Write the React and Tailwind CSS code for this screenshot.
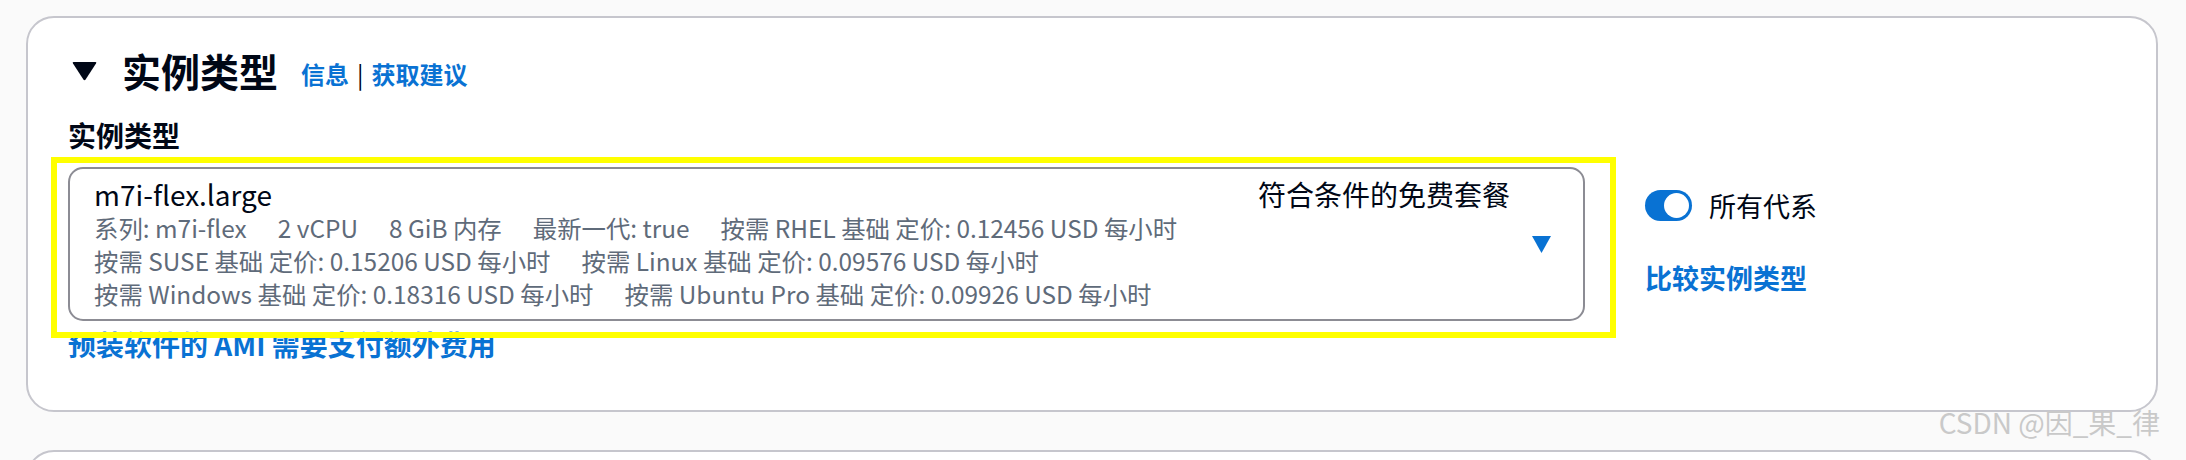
export default function App() {
  const font = { fontFamily: '"Noto Sans CJK SC", "Noto Sans", sans-serif' };

  const lines = [
    ['系列: m7i-flex', '2 vCPU', '8 GiB 内存', '最新一代: true', '按需 RHEL 基础 定价: 0.12456 USD 每小时'],
    ['按需 SUSE 基础 定价: 0.15206 USD 每小时', '按需 Linux 基础 定价: 0.09576 USD 每小时'],
    ['按需 Windows 基础 定价: 0.18316 USD 每小时', '按需 Ubuntu Pro 基础 定价: 0.09926 USD 每小时'],
  ];

  return (
    <div className="relative h-[460px] w-[2186px] overflow-hidden bg-[#fafafa] pt-[16px]" style={font}>
      {/* Main card */}
      <div className="ml-[26px] h-[396px] w-[2132px] rounded-[28px] border-2 border-[#c6c6cd] bg-white pl-[40px] pt-[26px]">
        {/* Header */}
        <div className="flex h-[52px] items-center">
          <svg width="25" height="20" viewBox="0 0 25 20" className="ml-[4px] mt-[2px]">
            <path d="M1.5 1 H23.5 Q25 1 24 2.6 L13.6 18.4 Q12.5 20 11.4 18.4 L1 2.6 Q0 1 1.5 1 Z" fill="#000716" />
          </svg>
          <h2 className="ml-[25px] text-[39px] font-bold leading-none text-[#000716]">实例类型</h2>
          <div className="ml-[23px] mt-[8px] flex items-center text-[24px] font-bold text-[#0972d3]">
            <span>信息</span>
            <span className="mx-[8px] font-normal text-[#000716]">|</span>
            <span>获取建议</span>
          </div>
        </div>

        {/* Label */}
        <div className="mt-[22px] text-[28px] font-bold leading-[34px] text-[#000716]">实例类型</div>

        {/* Select row */}
        <div className="mt-[15px] flex items-start">
          <div className="relative">
            <div className="flex h-[154px] w-[1517px] items-center rounded-[15px] border-2 border-[#8c8c94] py-[9px] pl-[24px] pr-[32px]">
              <div className="flex-1">
                <div className="flex items-center justify-between leading-[33px]">
                  <span className="text-[28px] text-[#000716]">m7i-flex.large</span>
                  <span className="text-[28px] text-[#000716]">符合条件的免费套餐</span>
                </div>
                {lines.map((parts, i) => (
                  <div key={i} className="flex gap-[31px] text-[24.4px] leading-[33px] text-[#5f6b7a]">
                    {parts.map((p) => (
                      <span key={p}>{p}</span>
                    ))}
                  </div>
                ))}
              </div>
              <svg width="19" height="17" viewBox="0 0 19 17" className="ml-[22px]">
                <path d="M0 0 H19 L9.5 17 Z" fill="#0972d3" />
              </svg>
            </div>
            {/* highlight annotation */}
            <div className="pointer-events-none absolute -bottom-[17px] -left-[17px] -right-[31px] -top-[10px] z-10 border-[6px] border-[#ffff00]" />
          </div>

          {/* Right column */}
          <div className="ml-[60px] pt-[23px]">
            <div className="flex items-center">
              <div className="flex h-[31px] w-[47px] items-center justify-end rounded-full bg-[#0972d3] pr-[3px]">
                <div className="h-[25px] w-[25px] rounded-full bg-white" />
              </div>
              <span className="ml-[17px] text-[27px] leading-none text-[#000716]">所有代系</span>
            </div>
            <div className="mt-[43px] text-[27px] font-bold leading-none text-[#0972d3]">比较实例类型</div>
          </div>
        </div>

        <div className="mt-[8px] text-[28px] font-bold leading-[30px] text-[#0972d3]">预装软件的 AMI 需要支付额外费用</div>
      </div>

      {/* Next card peeking in */}
      <div className="ml-[26px] mt-[38px] h-[60px] w-[2132px] rounded-[28px] border-2 border-[#c6c6cd] bg-white" />

      {/* Watermark */}
      <div className="pointer-events-none absolute bottom-[17px] right-[26px] text-[28px] text-[#c9c9c9]">CSDN @因_果_律</div>
    </div>
  );
}
